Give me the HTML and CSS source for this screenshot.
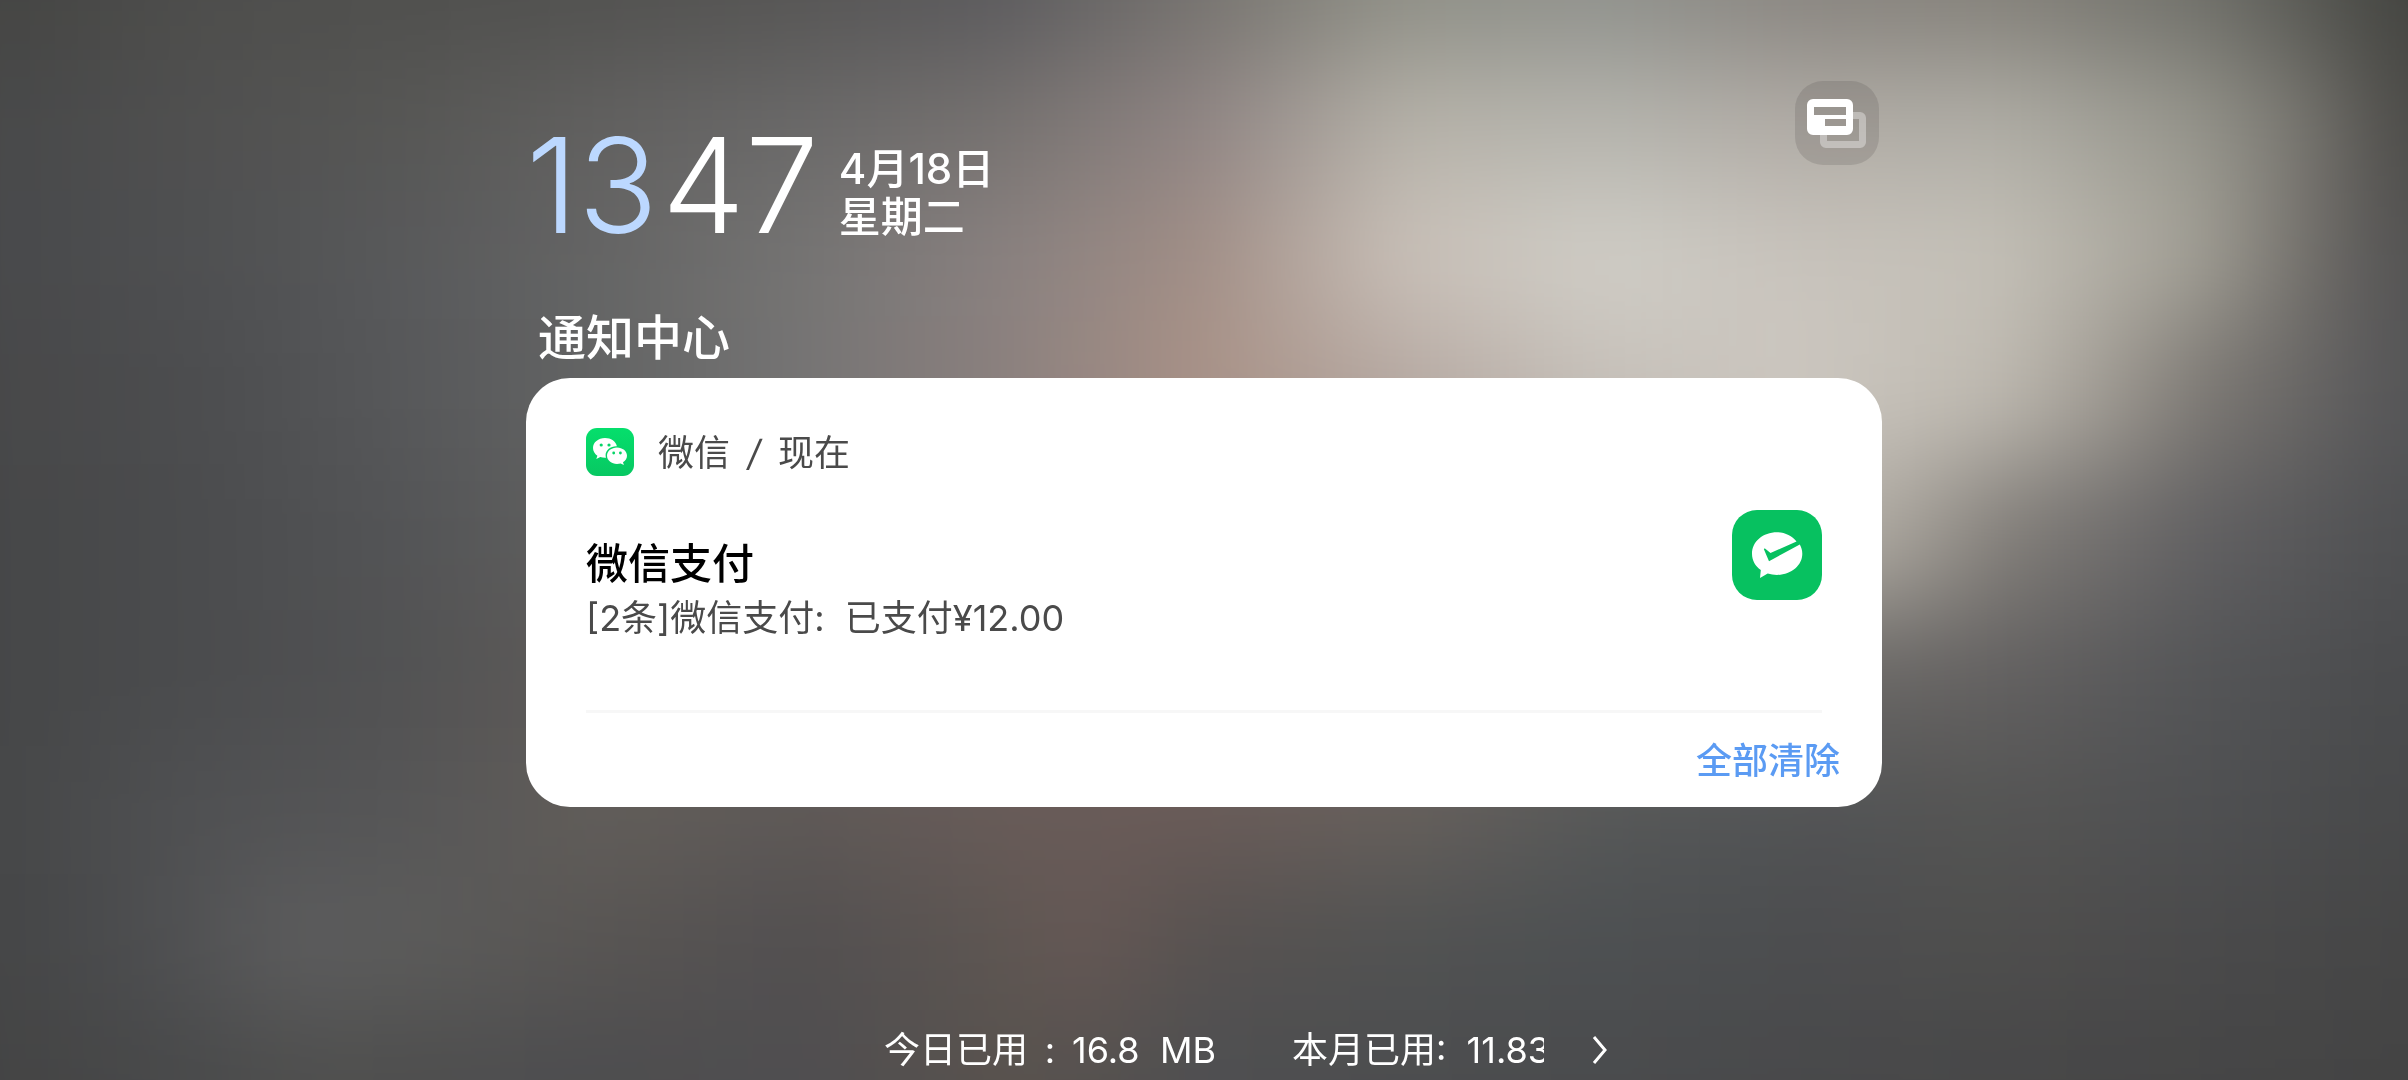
FILE: index.html
```html
<!DOCTYPE html>
<html lang="zh-CN">
<head>
<meta charset="utf-8">
<meta name="viewport" content="width=device-width, initial-scale=1">
<title>通知中心</title>
<link rel="stylesheet" href="styles.css">
</head>
<body>
<svg class="wallpaper" viewBox="0 0 2408 1080" preserveAspectRatio="none" aria-hidden="true">
  <defs>
    <filter id="soft" filterUnits="userSpaceOnUse" x="-300" y="-300" width="3008" height="1680" color-interpolation-filters="sRGB"><feGaussianBlur stdDeviation="36 52"/></filter>
    <linearGradient id="b0" gradientUnits="userSpaceOnUse" x1="0" y1="0" x2="2400" y2="0">
      <stop offset="0" stop-color="#454543"/><stop offset=".0833" stop-color="#4e4e4c"/><stop offset=".25" stop-color="#525250"/><stop offset=".3333" stop-color="#575655"/><stop offset=".4167" stop-color="#5c5b5e"/><stop offset=".5" stop-color="#76736f"/><stop offset=".5833" stop-color="#8f8f86"/><stop offset=".6667" stop-color="#90928d"/><stop offset=".75" stop-color="#898580"/><stop offset=".8333" stop-color="#84817a"/><stop offset=".9167" stop-color="#70706a"/><stop offset="1" stop-color="#434440"/>
    </linearGradient>
    <linearGradient id="b1" href="#b0">
      <stop offset="0" stop-color="#48494a"/><stop offset=".0833" stop-color="#505050"/><stop offset=".1667" stop-color="#575755"/><stop offset=".25" stop-color="#626160"/><stop offset=".3333" stop-color="#6a6969"/><stop offset=".4167" stop-color="#767270"/><stop offset=".5" stop-color="#908584"/><stop offset=".5833" stop-color="#b6b2a9"/><stop offset=".6667" stop-color="#b6b5ae"/><stop offset=".75" stop-color="#b1aca6"/><stop offset=".8333" stop-color="#b0aea6"/><stop offset=".9167" stop-color="#96958c"/><stop offset=".96" stop-color="#787670"/><stop offset="1" stop-color="#4c4b48"/>
    </linearGradient>
    <linearGradient id="b2" href="#b0">
      <stop offset="0" stop-color="#48494b"/><stop offset=".0833" stop-color="#4f5052"/><stop offset=".1667" stop-color="#58595b"/><stop offset=".25" stop-color="#656565"/><stop offset=".3333" stop-color="#757473"/><stop offset=".4167" stop-color="#898180"/><stop offset=".5" stop-color="#a18e86"/><stop offset=".5833" stop-color="#c9c0b8"/><stop offset=".6667" stop-color="#d0cec7"/><stop offset=".75" stop-color="#c8c3bc"/><stop offset=".8333" stop-color="#c4c0b7"/><stop offset=".9167" stop-color="#a3a096"/><stop offset=".96" stop-color="#74716c"/><stop offset="1" stop-color="#535252"/>
    </linearGradient>
    <linearGradient id="b3" href="#b0">
      <stop offset="0" stop-color="#484849"/><stop offset=".0833" stop-color="#4c4d4f"/><stop offset=".1667" stop-color="#57585a"/><stop offset=".25" stop-color="#636464"/><stop offset=".3333" stop-color="#757474"/><stop offset=".4167" stop-color="#8b807e"/><stop offset=".5" stop-color="#aa9287"/><stop offset=".5833" stop-color="#b6a9a2"/><stop offset=".6667" stop-color="#c6c0b9"/><stop offset=".75" stop-color="#ccc7c0"/><stop offset=".8333" stop-color="#bfbab1"/><stop offset=".875" stop-color="#a29d95"/><stop offset=".9167" stop-color="#7d7974"/><stop offset="1" stop-color="#555557"/>
    </linearGradient>
    <linearGradient id="b4" href="#b0">
      <stop offset="0" stop-color="#464748"/><stop offset=".0833" stop-color="#4b4c4e"/><stop offset=".1667" stop-color="#535456"/><stop offset=".25" stop-color="#60605f"/><stop offset=".4167" stop-color="#80736f"/><stop offset=".5833" stop-color="#8f8580"/><stop offset=".75" stop-color="#b8b3aa"/><stop offset=".7917" stop-color="#a8a39b"/><stop offset=".8333" stop-color="#827e79"/><stop offset=".9167" stop-color="#616062"/><stop offset="1" stop-color="#4f5052"/>
    </linearGradient>
    <linearGradient id="b5" href="#b0">
      <stop offset="0" stop-color="#464748"/><stop offset=".0833" stop-color="#4b4c4e"/><stop offset=".1667" stop-color="#525253"/><stop offset=".25" stop-color="#5e5a58"/><stop offset=".5" stop-color="#74645f"/><stop offset=".75" stop-color="#6c6966"/><stop offset=".8333" stop-color="#626060"/><stop offset=".9167" stop-color="#545557"/><stop offset="1" stop-color="#4a4b4d"/>
    </linearGradient>
    <linearGradient id="b6" href="#b0">
      <stop offset="0" stop-color="#464748"/><stop offset=".0833" stop-color="#505153"/><stop offset=".1667" stop-color="#565657"/><stop offset=".25" stop-color="#625e5a"/><stop offset=".3333" stop-color="#5e5957"/><stop offset=".4167" stop-color="#685b58"/><stop offset=".5" stop-color="#695b58"/><stop offset=".5833" stop-color="#66605c"/><stop offset=".6667" stop-color="#565858"/><stop offset=".75" stop-color="#515355"/><stop offset=".8333" stop-color="#555554"/><stop offset=".9167" stop-color="#4f5052"/><stop offset="1" stop-color="#48494a"/>
    </linearGradient>
    <linearGradient id="b7" href="#b0">
      <stop offset="0" stop-color="#454647"/><stop offset=".05" stop-color="#4b4c4e"/><stop offset=".125" stop-color="#5d5d5e"/><stop offset=".1667" stop-color="#5c5c5b"/><stop offset=".25" stop-color="#585553"/><stop offset=".3333" stop-color="#524f50"/><stop offset=".4167" stop-color="#5d5652"/><stop offset=".45" stop-color="#665855"/><stop offset=".5" stop-color="#575250"/><stop offset=".5833" stop-color="#515252"/><stop offset=".6667" stop-color="#4d5052"/><stop offset=".75" stop-color="#4c4d4f"/><stop offset=".8333" stop-color="#4f4e4d"/><stop offset=".9167" stop-color="#4a4a4b"/><stop offset="1" stop-color="#464646"/>
    </linearGradient>
    <linearGradient id="b8" href="#b0">
      <stop offset="0" stop-color="#444444"/><stop offset=".0833" stop-color="#494a4b"/><stop offset=".125" stop-color="#4f4f4e"/><stop offset=".25" stop-color="#4d4d4f"/><stop offset=".3333" stop-color="#4f4e50"/><stop offset=".4167" stop-color="#58524e"/><stop offset=".4583" stop-color="#55514f"/><stop offset=".5" stop-color="#4e4f51"/><stop offset=".6667" stop-color="#4a4b4d"/><stop offset=".8333" stop-color="#474748"/><stop offset="1" stop-color="#444444"/>
    </linearGradient>
  </defs>
  <g filter="url(#soft)">
    <rect x="-300" y="-300" width="3008" height="360" fill="url(#b0)"/>
    <rect x="-300" y="60" width="3008" height="130" fill="url(#b1)"/>
    <rect x="-300" y="190" width="3008" height="130" fill="url(#b2)"/>
    <rect x="-300" y="320" width="3008" height="145" fill="url(#b3)"/>
    <rect x="-300" y="465" width="3008" height="145" fill="url(#b4)"/>
    <rect x="-300" y="610" width="3008" height="135" fill="url(#b5)"/>
    <rect x="-300" y="745" width="3008" height="130" fill="url(#b6)"/>
    <rect x="-300" y="875" width="3008" height="135" fill="url(#b7)"/>
    <rect x="-300" y="1010" width="3008" height="370" fill="url(#b8)"/>
  </g>
</svg>
<main class="shade">
  <header class="top">
    <div class="now">
      <time class="clock" datetime="13:47"><span class="hour">13</span><span class="minute">47</span></time>
      <p class="date"><span>4月18日</span><span>星期二</span></p>
    </div>
    <button class="manage" type="button" aria-label="通知管理">
      <svg viewBox="0 0 84 84" width="84" height="84" aria-hidden="true">
        <path d="M58 31h7a6 6 0 0 1 6 6v24a6 6 0 0 1-6 6H31a6 6 0 0 1-6-6v-7h7v6h32V38h-6z" fill="#fff" fill-opacity=".36"/>
        <path fill-rule="evenodd" d="M18 18h34a6 6 0 0 1 6 6v24a6 6 0 0 1-6 6H18a6 6 0 0 1-6-6V24a6 6 0 0 1 6-6zM19 26v8h32v-8zM30 38v7h21v-7z" fill="#fff"/>
      </svg>
    </button>
  </header>
  <h1 class="heading">通知中心</h1>
  <section class="card">
    <article class="note">
      <div class="source">
        <svg viewBox="0 0 48 48" width="48" height="48" aria-hidden="true">
          <defs><linearGradient id="wx" x1="0" y1="0" x2="0" y2="1"><stop offset="0" stop-color="#05df6c"/><stop offset="1" stop-color="#07c862"/></linearGradient></defs>
          <rect width="48" height="48" rx="11" fill="url(#wx)"/>
          <path d="M19 10c-6.700 0-12 4.400-12 10 0 3.200 1.700 5.900 4.400 7.700L10.300 31l4-2c1.500.5 3.100.8 4.700.8h1c-.3-.9-.4-1.800-.4-2.700 0-5 4.800-8.900 10.600-8.900h.7C30 13.500 25 10 19 10z" fill="#fff"/>
          <path d="M41 27.700c0-4.600-4.500-8.200-10-8.200s-10 3.600-10 8.200 4.500 8.200 10 8.200c1.300 0 2.500-.2 3.600-.5l3.300 1.700-.9-2.800c2.400-1.500 4-3.900 4-6.600z" fill="#fff"/>
          <circle cx="15.200" cy="17" r="1.600" fill="#06d467"/><circle cx="23" cy="17" r="1.600" fill="#06d467"/>
          <circle cx="27.700" cy="25" r="1.400" fill="#06d467"/><circle cx="34.400" cy="25" r="1.400" fill="#06d467"/>
        </svg>
        <p class="origin"><span>微信</span><span class="slash">/</span><span>现在</span></p>
      </div>
      <div class="content">
        <div class="message">
          <h2 class="title">微信支付</h2>
          <p class="text">[2条]微信支付:&nbsp; 已支付¥12.00</p>
        </div>
        <svg viewBox="0 0 90 90" width="90" height="90" aria-hidden="true">
          <rect width="90" height="90" rx="25" fill="#07c160"/>
          <path d="M64.500 31.500C60 26 53 22.300 45 22.300c-14 0-25 9.400-25 21.400 0 6.600 3.300 12.400 8.800 16.300L28 68l7.700-4.500c3 .9 6 1.400 9.300 1.400 14 0 25.300-9.500 25.300-21.200 0-3.300-.9-6.500-2.500-9.300L37 51.200 32 39.500c-.4-1 .6-1.300 1.300-.7l5.200 4.200z" fill="#fff"/>
        </svg>
      </div>
    </article>
    <footer class="actions"><button class="clear" type="button">全部清除</button></footer>
  </section>
  <a class="usage" href="#">
    <span class="today">今日已用<span class="colon">:</span>16.8&nbsp; MB</span>
    <span class="month">本月已用:&nbsp; 11.83</span>
    <svg viewBox="0 0 16 30" width="16" height="30" aria-hidden="true"><path d="M2 2l11 13L2 28" fill="none" stroke="#fff" stroke-width="3"/></svg>
  </a>
</main>
</body>
</html>
```
FILE: styles.css
```css
* { box-sizing: border-box; }

body {
  margin: 0;
  min-height: 100vh;
  overflow: hidden;
  background: #4e4e50;
  color: #fff;
  font-family: Inter, "Noto Sans CJK SC", sans-serif;
  font-size: 36px;
  line-height: 48px;
}

h1, h2, p { margin: 0; }

button {
  padding: 0;
  border: 0;
  background: none;
  color: inherit;
  font: inherit;
}

svg { display: block; flex: none; }

.wallpaper {
  position: fixed;
  inset: 0;
  z-index: -1;
  width: 100%;
  height: 100%;
}

.shade {
  display: flex;
  flex-direction: column;
  width: 100%;
  max-width: 1356px;
  min-height: 100vh;
  margin: 0 auto;
  padding: 81px 0 6px;
}

.top {
  display: flex;
  justify-content: space-between;
  align-items: flex-start;
}

.now {
  display: flex;
  align-items: flex-end;
  gap: 20px;
  padding-top: 32px;
}

.clock {
  display: flex;
  gap: 4px;
  font-size: 132px;
  font-weight: 300;
  line-height: 144px;
}

.hour { color: #bcd8ff; }

.date {
  display: flex;
  flex-direction: column;
  padding-bottom: 16px;
  font-size: 42px;
  font-weight: 500;
}

.manage {
  width: 84px;
  height: 84px;
  margin-right: 3px;
  border-radius: 28px;
  background: rgba(60, 56, 54, .16);
}

.heading {
  padding: 49px 12px 8px;
  font-size: 48px;
  font-weight: 500;
  line-height: 64px;
}

.card {
  padding: 48px 60px 22px;
  border-radius: 44px;
  background: #fff;
}

.note {
  padding-bottom: 68px;
  border-bottom: 3px solid #f7f7f7;
}

.source {
  display: flex;
  align-items: center;
  gap: 24px;
  color: #4a4a4a;
}

.origin {
  display: flex;
  padding-top: 3px;
}

.slash {
  width: 48px;
  font-style: italic;
  text-align: center;
}

.content {
  display: flex;
  justify-content: space-between;
  align-items: flex-start;
  padding-top: 33px;
}

.message { padding-top: 26px; }

.title {
  color: #000;
  font-size: 42px;
  font-weight: 500;
  line-height: 56px;
}

.text {
  padding-top: 2px;
  color: #4a4a4a;
}

.actions {
  display: flex;
  justify-content: flex-end;
  margin-right: -18px;
  padding-top: 24px;
}

.clear { color: #5b9bf3; font-weight: 500; }

.usage {
  display: flex;
  align-items: center;
  align-self: center;
  margin-top: auto;
  margin-left: 84px;
  color: #fff;
  text-decoration: none;
  white-space: nowrap;
}

.today { margin-right: 76px; }

.colon { display: inline-block; width: 44px; text-align: center; }

.month { width: 252px; margin-right: 48px; overflow: hidden; }
```
